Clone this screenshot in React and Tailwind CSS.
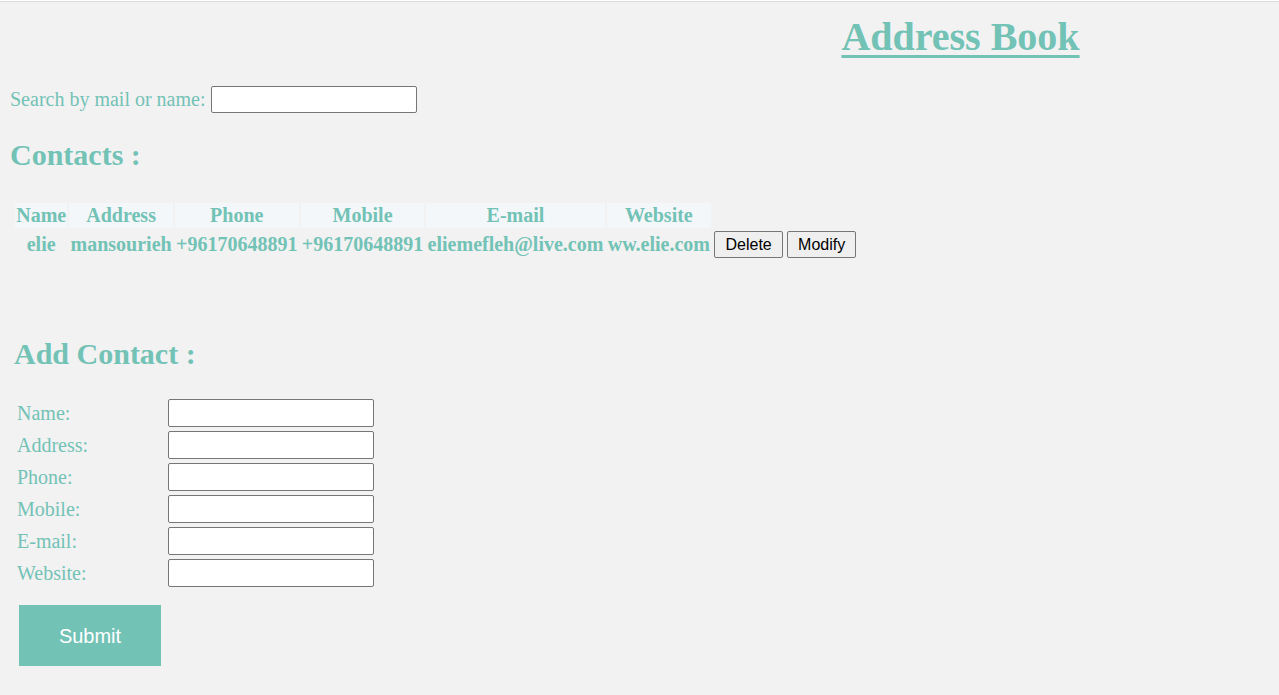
import React from "react";

const contacts = [
  {
    name: "elie",
    address: "mansourieh",
    phone: "+96170648891",
    mobile: "+96170648891",
    email: "eliemefleh@live.com",
    website: "ww.elie.com",
  },
];

const fields = ["Name:", "Address:", "Phone:", "Mobile:", "E-mail:", "Website:"];

function App() {
  return (
    <div className="min-h-[695px] bg-[#f2f2f2] text-[#72c2b6] font-['Liberation_Serif','Times_New_Roman',serif]">
      <div className="h-px bg-white" />
      <div className="h-px bg-[#dcdcdc]" />

      {/* Title */}
      <h1 className="mt-[12px] pl-[642px] text-center text-[40px] leading-[46px] font-bold underline decoration-[3px] underline-offset-[5px]">
        Address Book
      </h1>

      {/* Search */}
      <div className="mt-[26px] pl-[10px] flex items-center gap-[5px]">
        <label className="text-[20px] leading-[23px]">Search by mail or name:</label>
        <input
          type="text"
          className="w-[206px] h-[27px] bg-white border border-[#767676] rounded-[2px] outline-none"
        />
      </div>

      {/* Contacts */}
      <h2 className="mt-[25px] pl-[10px] text-[30px] leading-[34px] font-bold">Contacts :</h2>

      <table className="mt-[29px] ml-[13px] border-separate border-spacing-[2px] text-[20px] leading-[23px] font-bold">
        <thead>
          <tr>
            {["Name", "Address", "Phone", "Mobile", "E-mail", "Website"].map((h) => (
              <th key={h} className="bg-[#f4f7f9] px-[1.2px] py-[1px] text-center">
                {h}
              </th>
            ))}
          </tr>
        </thead>
        <tbody>
          {contacts.map((c) => (
            <tr key={c.email}>
              <td className="px-[1.2px] py-[1px] text-center">{c.name}</td>
              <td className="px-[1.2px] py-[1px] text-center">{c.address}</td>
              <td className="px-[1.2px] py-[1px] text-center">{c.phone}</td>
              <td className="px-[1.2px] py-[1px] text-center">{c.mobile}</td>
              <td className="px-[1.2px] py-[1px] text-center">{c.email}</td>
              <td className="px-[1.2px] py-[1px] text-center">{c.website}</td>
              <td className="px-px py-[1px]">
                <div className="flex gap-[4px]">
                  <button className="h-[27px] w-[69px] bg-[#efefef] border border-[#767676] rounded-[2px] text-black text-[16px] font-normal font-['Liberation_Sans',Arial,sans-serif]">
                    Delete
                  </button>
                  <button className="h-[27px] w-[69px] bg-[#efefef] border border-[#767676] rounded-[2px] text-black text-[16px] font-normal font-['Liberation_Sans',Arial,sans-serif]">
                    Modify
                  </button>
                </div>
              </td>
            </tr>
          ))}
        </tbody>
      </table>

      {/* Add contact */}
      <div className="mt-[76px] pl-[14px]">
        <h2 className="text-[30px] leading-[34px] font-bold">Add Contact :</h2>

        <div className="mt-[28px] pl-[3px] grid grid-cols-[151px_206px] gap-y-[4px] items-center">
          {fields.map((f) => (
            <React.Fragment key={f}>
              <label className="text-[20px] leading-[23px]">{f}</label>
              <input
                type="text"
                className="h-[28px] w-[206px] bg-white border border-[#767676] rounded-[2px] outline-none"
              />
            </React.Fragment>
          ))}
        </div>

        <button className="mt-[18px] ml-[5px] w-[142px] h-[61px] bg-[#72c2b6] text-white text-[20px] font-['Liberation_Sans',Arial,sans-serif]">
          Submit
        </button>
      </div>
    </div>
  );
}

export default App;
